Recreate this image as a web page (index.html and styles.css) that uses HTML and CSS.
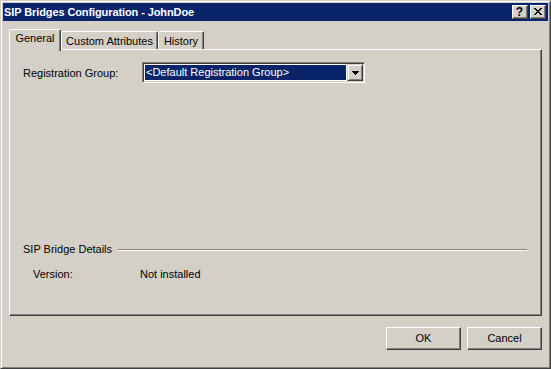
FILE: index.html
```html
<!DOCTYPE html>
<html>
<head>
<meta charset="utf-8">
<title>SIP Bridges Configuration - JohnDoe</title>
<link rel="stylesheet" href="styles.css">
</head>
<body>
<div class="window">
  <div class="titlebar">
    <span class="title">SIP Bridges Configuration - JohnDoe</span>
    <div class="caption-buttons">
      <div class="cap-btn help">?</div>
      <div class="cap-btn close">
        <svg width="8" height="7" viewBox="0 0 8 7"><path d="M0 0h2v1h-2zM6 0h2v1h-2zM1 1h2v1h-2zM5 1h2v1h-2zM2 2h4v1h-4zM3 3h2v1h-2zM2 4h4v1h-4zM1 5h2v1h-2zM5 5h2v1h-2zM0 6h2v1h-2zM6 6h2v1h-2z" fill="#000"/></svg>
      </div>
    </div>
  </div>
  <div class="content">
    <div class="tabs">
      <div class="tab selected tab-general">General</div>
      <div class="tab tab-custom">Custom Attributes</div>
      <div class="tab tab-history">History</div>
    </div>
    <div class="panel">
      <div class="row">
        <div class="label reg-label">Registration Group:</div>
        <div class="combo">
          <div class="combo-value">&lt;Default Registration Group&gt;</div>
          <div class="combo-btn">
            <svg width="7" height="4" viewBox="0 0 7 4"><path d="M0 0h7v1h-7zM1 1h5v1h-5zM2 2h3v1h-3zM3 3h1v1h-1z" fill="#000"/></svg>
          </div>
        </div>
      </div>
      <div class="group-header">
        <span class="group-title">SIP Bridge Details</span>
        <div class="group-line"></div>
      </div>
      <div class="detail-row">
        <div class="detail-label">Version:</div>
        <div class="detail-value">Not installed</div>
      </div>
    </div>
    <div class="buttons">
      <div class="btn">OK</div>
      <div class="btn">Cancel</div>
    </div>
  </div>
</div>
</body>
</html>
```
FILE: styles.css
```css
html, body {
  margin: 0;
  padding: 0;
  background: #d4d0c8;
}
body {
  font-family: "Liberation Sans", Arial, sans-serif;
  font-size: 11px;
  color: #000;
}
.window {
  width: 551px;
  height: 369px;
  box-sizing: border-box;
  border: 1px solid;
  border-color: #d4d0c8 #404040 #404040 #d4d0c8;
  box-shadow: inset 1px 1px 0 #fff, inset -1px -1px 0 #808080;
  padding: 2px;
  background: #d4d0c8;
  display: flex;
  flex-direction: column;
}
.titlebar {
  height: 18px;
  background: #0a246a;
  display: flex;
  align-items: center;
  justify-content: space-between;
  padding-left: 1px;
}
.title {
  color: #fff;
  font-weight: bold;
  font-size: 11px;
  line-height: 13px;
  letter-spacing: -0.1px;
}
.caption-buttons {
  display: flex;
  gap: 2px;
  padding-right: 2px;
}
.cap-btn {
  width: 16px;
  height: 14px;
  box-sizing: border-box;
  background: #d4d0c8;
  border: 1px solid;
  border-color: #fff #404040 #404040 #fff;
  box-shadow: inset -1px -1px 0 #808080;
  display: flex;
  align-items: center;
  justify-content: center;
}
.help {
  font-weight: bold;
  font-size: 12px;
  line-height: 12px;
  padding-right: 1px;
  padding-bottom: 1px;
}
.close svg {
  display: block;
  margin-right: 1px;
  margin-bottom: 1px;
}
.content {
  flex: 1;
  padding: 8px 6px 0 6px;
  display: flex;
  flex-direction: column;
}
.tabs {
  display: flex;
  align-items: flex-end;
  height: 20px;
}
.tab {
  box-sizing: border-box;
  height: 18px;
  padding-top: 3px;
  line-height: 13px;
  text-align: center;
  border-top: 1px solid #fff;
  border-left: 1px solid #fff;
  border-right: 1px solid #404040;
  box-shadow: inset -1px 0 0 #808080;
  border-radius: 2px 2px 0 0;
  background: #d4d0c8;
}
.tab.selected {
  height: 22px;
  margin-bottom: -2px;
  padding-top: 2px;
  position: relative;
  z-index: 1;
}
.tab-general { width: 52px; }
.tab-custom { width: 97px; }
.tab-history { width: 46px; }
.panel {
  width: 533px;
  height: 267px;
  box-sizing: border-box;
  border: 1px solid;
  border-color: #fff #404040 #404040 #fff;
  box-shadow: inset -1px -1px 0 #808080;
  padding: 12px 14px 0 13px;
  display: flex;
  flex-direction: column;
}
.row {
  display: flex;
  align-items: center;
  height: 21px;
}
.reg-label {
  width: 119px;
  line-height: 13px;
  padding-top: 1px;
}
.combo {
  width: 223px;
  height: 21px;
  box-sizing: border-box;
  border: 1px solid;
  border-color: #808080 #fff #fff #808080;
  box-shadow: inset 1px 1px 0 #404040, inset -1px -1px 0 #d4d0c8;
  padding: 1px;
  background: #fff;
  display: flex;
}
.combo-value {
  flex: 1;
  margin: 1px;
  background: #0a246a;
  color: #fff;
  line-height: 15px;
  padding-left: 1px;
  white-space: nowrap;
  overflow: hidden;
}
.combo-btn {
  width: 16px;
  height: 17px;
  box-sizing: border-box;
  background: #d4d0c8;
  border: 1px solid;
  border-color: #d4d0c8 #404040 #404040 #d4d0c8;
  box-shadow: inset 1px 1px 0 #fff, inset -1px -1px 0 #808080;
  display: flex;
  align-items: center;
  justify-content: center;
}
.combo-btn svg { display: block; }
.group-header {
  margin-top: 160px;
  display: flex;
  align-items: center;
  height: 13px;
}
.group-title {
  line-height: 13px;
  white-space: nowrap;
}
.group-line {
  flex: 1;
  margin-left: 6px;
  border-top: 1px solid #808080;
  border-bottom: 1px solid #fff;
}
.detail-row {
  display: flex;
  margin-top: 12px;
  padding-left: 10px;
  line-height: 13px;
}
.detail-label {
  width: 107px;
}
.buttons {
  display: flex;
  justify-content: flex-end;
  gap: 6px;
  margin-top: 11px;
}
.btn {
  width: 75px;
  height: 23px;
  box-sizing: border-box;
  border: 1px solid;
  border-color: #fff #404040 #404040 #fff;
  box-shadow: inset -1px -1px 0 #808080;
  background: #d4d0c8;
  display: flex;
  align-items: center;
  justify-content: center;
  line-height: 13px;
}
```
